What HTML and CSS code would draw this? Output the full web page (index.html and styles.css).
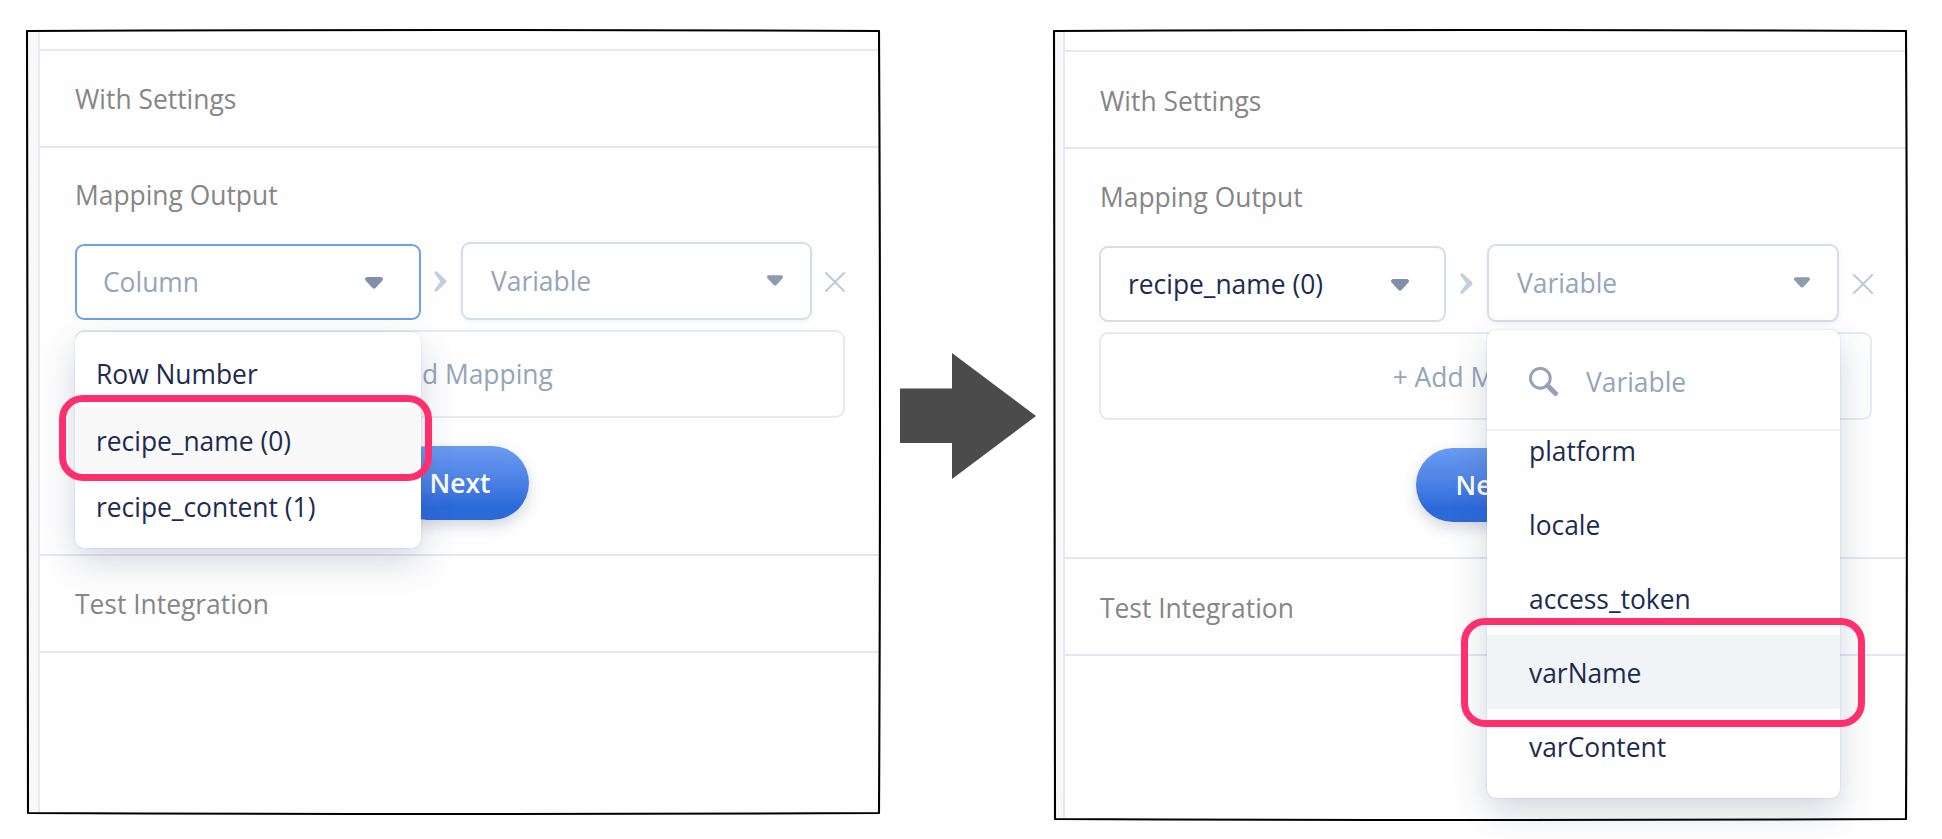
FILE: index.html
```html
<!DOCTYPE html>
<html lang="en">
<head>
<meta charset="utf-8">
<title>Mapping Output</title>
<link rel="stylesheet" href="styles.css">
</head>
<body>
<main class="stage">
  <section class="panel panel-column">
    <div class="gutter"></div>
    <div class="content">
      <div class="topbar"></div>
      <div class="row">With Settings</div>
      <div class="mapping">
        <h2 class="title">Mapping Output</h2>
        <div class="pair">
          <div class="select select-column active">
            <span>Column</span>
            <svg class="caret" viewBox="0 0 18 12"><path d="M2 0H16Q18 .3 18 2Q18 3 17 4L10.5 11Q9 12.3 7.5 11L1 4Q0 3 0 2Q0 .3 2 0Z"/></svg>
            <div class="menu menu-column">
              <div class="option">Row Number</div>
              <div class="option hovered">recipe_name (0)</div>
              <div class="option">recipe_content (1)</div>
              <div class="highlight"></div>
            </div>
          </div>
          <svg class="chevron" viewBox="0 0 13 21"><path d="M.6 .8Q1.6 -.4 2.8 .6L12 9Q13.4 10.4 12 11.8L2.8 20.4Q1.6 21.4 .6 20.2Q0 19.4 .5 18.6L6.4 10.4L.5 2.4Q0 1.6 .6 .8Z"/></svg>
          <div class="select select-variable">
            <span>Variable</span>
            <svg class="caret" viewBox="0 0 18 12"><path d="M2 0H16Q18 .3 18 2Q18 3 17 4L10.5 11Q9 12.3 7.5 11L1 4Q0 3 0 2Q0 .3 2 0Z"/></svg>
          </div>
          <svg class="remove" viewBox="0 0 20 20"><path d="M1 1L19 19M19 1L1 19"/></svg>
        </div>
        <div class="add">+ Add Mapping</div>
        <div class="next">Next</div>
      </div>
      <div class="row">Test Integration</div>
    </div>
    <svg class="frame" viewBox="0 0 857 788"><path d="M2 3Q427 1 854 3Q856 395 854 785Q427 787 3 785Q4 395 2 3Z"/></svg>
  </section>

  <svg class="arrow" viewBox="0 0 136 126"><path d="M0 35.5H52V0L136 63L52 126V90H0Z"/></svg>

  <section class="panel panel-variable">
    <div class="gutter"></div>
    <div class="content">
      <div class="topbar"></div>
      <div class="row">With Settings</div>
      <div class="mapping">
        <h2 class="title">Mapping Output</h2>
        <div class="pair">
          <div class="select select-column chosen">
            <span>recipe_name (0)</span>
            <svg class="caret" viewBox="0 0 18 12"><path d="M2 0H16Q18 .3 18 2Q18 3 17 4L10.5 11Q9 12.3 7.5 11L1 4Q0 3 0 2Q0 .3 2 0Z"/></svg>
          </div>
          <svg class="chevron" viewBox="0 0 13 21"><path d="M.6 .8Q1.6 -.4 2.8 .6L12 9Q13.4 10.4 12 11.8L2.8 20.4Q1.6 21.4 .6 20.2Q0 19.4 .5 18.6L6.4 10.4L.5 2.4Q0 1.6 .6 .8Z"/></svg>
          <div class="select select-variable">
            <span>Variable</span>
            <svg class="caret" viewBox="0 0 18 12"><path d="M2 0H16Q18 .3 18 2Q18 3 17 4L10.5 11Q9 12.3 7.5 11L1 4Q0 3 0 2Q0 .3 2 0Z"/></svg>
            <div class="menu menu-variable">
              <div class="search">
                <svg class="magnifier" viewBox="0 0 29 29"><circle cx="11.3" cy="11.3" r="9.9"/><path d="M18.5 18.5L26.5 26.5"/></svg>
                <span>Variable</span>
              </div>
              <div class="option">platform</div>
              <div class="option">locale</div>
              <div class="option">access_token</div>
              <div class="option hovered">varName</div>
              <div class="option">varContent</div>
              <div class="highlight"></div>
            </div>
          </div>
          <svg class="remove" viewBox="0 0 20 20"><path d="M1 1L19 19M19 1L1 19"/></svg>
        </div>
        <div class="add">+ Add Mapping</div>
        <div class="next">Next</div>
      </div>
      <div class="row">Test Integration</div>
    </div>
    <svg class="frame" viewBox="0 0 857 794"><path d="M2 3Q427 1 854 3Q856 395 854 791Q427 793 3 791Q4 395 2 3Z"/></svg>
  </section>
</main>
</body>
</html>
```
FILE: styles.css
```css
* { box-sizing: border-box; }

body {
  margin: 0;
  background: #fff;
  font-family: "Open Sans", sans-serif;
  font-size: 26.4px;
  line-height: 36px;
  color: #868686;
  overflow: hidden;
}

svg { display: block; flex: none; }

.stage {
  display: flex;
  align-items: flex-start;
  width: 1942px;
  height: 839px;
  padding: 30px 0 0 27px;
}

.panel {
  position: relative;
  display: flex;
  width: 853px;
  height: 784px;
  background: #fefefe;
}

.gutter {
  flex: none;
  width: 13px;
  background: #f8f8f9;
  border-right: 2px solid #e6e8f1;
}

.content { flex: 1; }

.topbar {
  height: 21px;
  border-bottom: 2px solid #e6e9f1;
}

.row {
  display: flex;
  align-items: center;
  height: 97px;
  padding: 1px 0 0 35px;
  border-bottom: 2px solid #e4e7ef;
}

.mapping {
  height: 408px;
  padding: 29px 34px 0 35px;
  border-bottom: 2px solid #e4e7ef;
}

.title {
  margin: 0;
  font-size: inherit;
  font-weight: 400;
}

.pair {
  display: flex;
  align-items: flex-end;
  height: 78px;
  margin-top: 29px;
}

.select {
  position: relative;
  display: flex;
  align-items: center;
  justify-content: space-between;
  border: 2px solid #d7dde7;
  border-radius: 9px;
  background: #fff;
  color: #94a5b9;
}

.select-column { width: 346px; height: 76px; padding: 0 36px 1px 26px; }
.select-variable { width: 351px; height: 78px; padding: 0 27px 0 28px; box-shadow: 0 1px 5px rgba(60, 80, 120, .07); }
.active { border-color: #6f9ff0; }
.chosen { color: #1d2b50; }

.caret { width: 18px; height: 12px; margin-top: 2px; fill: #8090a6; }
.select-variable > .caret { width: 16px; height: 11px; margin: 0 0 2px; fill: #8c9bae; }

.chevron { width: 13px; height: 21px; margin: 0 14px 28px 13px; fill: #c2cfdd; }
.remove { width: 20px; height: 20px; margin: 0 0 28px 13px; fill: none; stroke: #bccbda; stroke-width: 2; stroke-linecap: round; }

.add {
  display: flex;
  align-items: center;
  justify-content: center;
  width: 770px;
  height: 88px;
  margin-top: 10px;
  border: 2px solid #e6ebf0;
  border-radius: 9px;
  color: #94a5b9;
}

.next {
  width: 139px;
  height: 74px;
  margin: 28px auto 0 315px;
  padding-left: 1px;
  border-radius: 37px;
  background: linear-gradient(#699bf0, #4a80e4 50%, #2c69d9 82%, #2c69d9);
  box-shadow: 0 6px 14px rgba(40, 60, 100, .2);
  color: #fff;
  font-weight: 600;
  line-height: 75px;
  text-align: center;
}

.menu {
  position: absolute;
  z-index: 2;
  border-radius: 9px;
  background: #fff;
  box-shadow: 0 0 2px rgba(70, 90, 150, .25), 0 14px 34px rgba(50, 65, 110, .2);
  color: #1d2b50;
}

.menu-column { left: -2px; top: 86px; width: 346px; height: 216px; padding-top: 8px; }
.menu-column .option { height: 66.6px; padding-left: 21px; line-height: 68px; }
.menu-column .hovered { background: #f9f9fa; }

.menu-variable { left: -2px; top: 84px; width: 353px; height: 468px; }
.menu-variable .option { height: 74px; padding-left: 42px; line-height: 76px; }
.menu-variable .hovered { background: #f0f4f7; }

.search {
  display: flex;
  align-items: center;
  gap: 28px;
  height: 101px;
  margin-bottom: -18px;
  padding: 4px 0 0 42px;
  border-bottom: 2px solid #edf0f5;
  color: #94a5b9;
}

.magnifier { width: 29px; height: 29px; fill: none; stroke: #94a3b6; stroke-width: 3; }
.magnifier path { stroke-width: 5; stroke-linecap: round; }

.highlight {
  position: absolute;
  border: 7px solid #ff2f6e;
  border-radius: 24px;
}

.menu-column .highlight { left: -16px; top: 63px; width: 373px; height: 86px; }
.menu-variable .highlight { left: -26px; top: 288px; width: 404px; height: 109px; }

.frame {
  position: absolute;
  left: -2px;
  top: -2px;
  width: 857px;
  fill: none;
  stroke: #000;
  stroke-width: 2.1;
  stroke-linejoin: round;
}

.arrow { width: 136px; height: 126px; margin: 323px 18px 0 20px; fill: #4b4b4b; }

.panel-variable { height: 790px; }
.panel-variable .gutter { width: 11px; }
.panel-variable .topbar { height: 22px; }
.panel-variable .row { padding: 2px 0 0 35px; }
.panel-variable .mapping { height: 410px; padding: 30px 34px 0 34px; }
.panel-variable .title { padding-left: 1px; }
.panel-variable .pair { margin-top: 29px; }
.panel-variable .select-column { width: 347px; padding: 0 35px 1px 27px; }
.panel-variable .select-variable { width: 352px; }
.panel-variable .chevron { margin-left: 14px; }
.panel-variable .remove { margin-left: 14px; }
.panel-variable .add { width: 773px; padding-top: 1px; }
.panel-variable .next { margin-left: 317px; }
```
